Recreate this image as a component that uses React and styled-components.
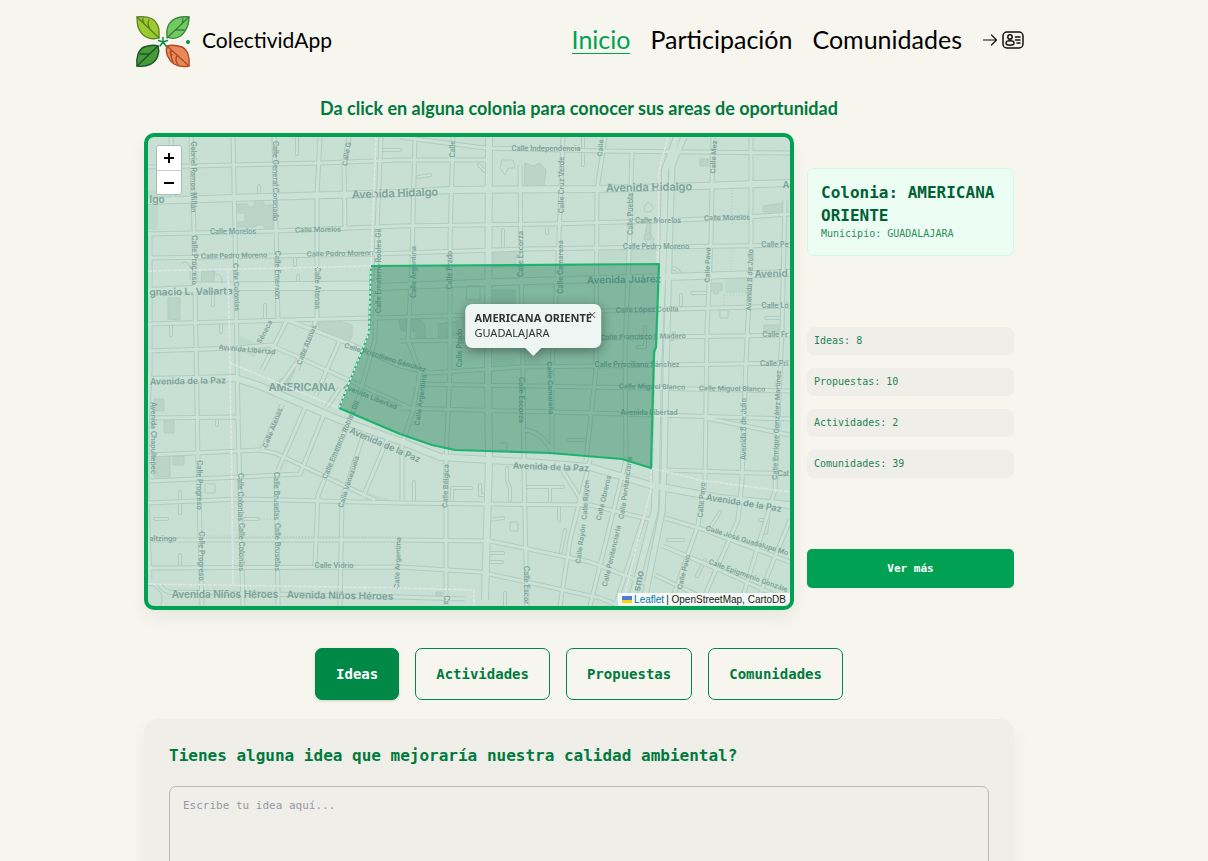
import React, { useState } from "react";
import styled, { createGlobalStyle, css } from "styled-components";

const mono = `"DejaVu Sans Mono", "Liberation Mono", monospace`;
const rounded = `Lato, "Open Sans", sans-serif`;

const color = {
  page: "#f6f5ee",
  panel: "#efeee9",
  green: "#00a152",
  active: "#008846",
  text: "#007a3d",
  dark: "#006034",
  soft: "#2b8d58",
};

const GlobalStyle = createGlobalStyle`
  * { box-sizing: border-box; }
  body { margin: 0; background: ${color.page}; font-family: ${mono}; color: ${color.text}; }
  h1, h2, p, ul { margin: 0; padding: 0; }
  ul { list-style: none; }
  button, textarea { font-family: inherit; }
`;

const Page = styled.div`
  padding-right: 50px;
`;

const Header = styled.header`
  max-width: 890px;
  height: 84px;
  margin: 0 auto;
  display: flex;
  align-items: center;
  justify-content: space-between;
  font-family: ${rounded};
`;

const Brand = styled.a`
  display: flex;
  align-items: center;
  gap: 10px;
  color: #000;
  font-size: 21px;
  line-height: 28px;
  text-decoration: none;
  svg { display: block; }
`;

const BrandName = styled.span`
  padding-bottom: 4px;
`;

const Nav = styled.nav`
  display: flex;
  align-items: center;
  gap: 20px;
  padding-bottom: 4px;
`;

const NavLink = styled.a`
  padding-bottom: 2px;
  font-size: 25px;
  line-height: 24px;
  color: ${(p) => (p.$current ? color.green : "#000")};
  text-decoration: none;
  border-bottom: 1px solid ${(p) => (p.$current ? color.green : "transparent")};
`;

const AccountLink = styled.a`
  display: flex;
  align-items: center;
  gap: 4px;
  color: #111;
  svg { display: block; }
`;

const Main = styled.main`
  max-width: 870px;
  margin: 0 auto;
`;

const Title = styled.h1`
  font: 700 18px/24px ${rounded};
  text-align: center;
  padding: 12px 0 13px;
`;

const Explorer = styled.section`
  display: grid;
  grid-template-columns: minmax(0, 1fr) 207px;
  gap: 13px;
`;

const MapFrame = styled.div`
  position: relative;
  height: 477px;
  border: 4px solid ${color.green};
  border-radius: 10px;
  overflow: hidden;
  background: #c8e0d3;
  box-shadow: 0 8px 16px rgba(0, 40, 20, 0.06);
`;

const MapDrawing = styled.svg`
  display: block;
  width: 100%;
  height: 100%;
  font-family: Inter, "Open Sans", sans-serif;
`;

const ZoomControl = styled.div`
  position: absolute;
  top: 8px;
  left: 8px;
  border: 1px solid #a9bdb2;
  border-radius: 3px;
  overflow: hidden;
  display: grid;
`;

const ZoomButton = styled.button`
  width: 24px;
  height: 24px;
  padding: 0;
  border: 0;
  background: #fff;
  color: #000;
  display: grid;
  place-items: center;
  & + & { border-top: 1px solid #ccc; }
`;

const Popup = styled.div`
  position: absolute;
  top: 167px;
  left: 60%;
  transform: translateX(-50%);
  padding: 6px 9px 8px;
  border-radius: 7px;
  background: #eef5f2;
  color: #333;
  font: 11px/15px "Noto Sans", sans-serif;
  white-space: nowrap;
  filter: drop-shadow(0 3px 6px rgba(0, 0, 0, 0.4));
  strong { display: block; }
  &::after {
    content: "";
    position: absolute;
    top: 100%;
    left: calc(50% - 8px);
    border: 8px solid transparent;
    border-top-color: #eef5f2;
    border-bottom: 0;
  }
`;

const CloseButton = styled.button`
  position: absolute;
  top: 7px;
  right: 5px;
  width: 8px;
  height: 8px;
  padding: 0;
  border: 0;
  background: none;
  color: #555;
  svg { display: block; }
`;

const Attribution = styled.div`
  position: absolute;
  right: 0;
  bottom: 0;
  display: flex;
  align-items: center;
  gap: 2px;
  padding: 0 4px;
  background: rgba(255, 255, 255, 0.8);
  color: #222;
  font: 10px/13px "Liberation Sans", Arial, sans-serif;
  a { color: #0078a8; text-decoration: none; }
`;

const Side = styled.aside`
  display: flex;
  flex-direction: column;
  justify-content: space-between;
  padding: 35px 0 22px;
`;

const ColonyCard = styled.div`
  padding: 12px 13px 14px;
  border: 1px solid #d2fae3;
  border-radius: 7px;
  background: #ecfdf3;
  h2 { font-size: 16px; line-height: 23px; color: ${color.dark}; }
  p { font-size: 10px; line-height: 14px; color: ${color.soft}; }
`;

const Stats = styled.ul`
  display: grid;
  gap: 13px;
`;

const Stat = styled.li`
  padding: 0 7px;
  border-radius: 7px;
  background: ${color.panel};
  font-size: 10px;
  line-height: 28px;
  color: #238650;
`;

const MoreButton = styled.button`
  height: 39px;
  border: 0;
  border-radius: 5px;
  background: ${color.green};
  color: #fff;
  font-size: 11px;
  font-weight: 700;
`;

const Tabs = styled.div`
  display: flex;
  justify-content: center;
  flex-wrap: wrap;
  gap: 16px;
  padding: 38px 0 19px;
`;

const Tab = styled.button`
  height: 52px;
  padding: 0 20px;
  border: 1px solid ${color.active};
  border-radius: 7px;
  background: transparent;
  color: ${color.text};
  font-size: 14px;
  font-weight: 700;
  ${(p) =>
    p.$active &&
    css`
      background: ${color.active};
      color: #fff;
      box-shadow: 0 1px 3px rgba(0, 0, 0, 0.15);
    `}
`;

const IdeaPanel = styled.section`
  padding: 25px;
  border-radius: 14px 14px 0 0;
  background: ${color.panel};
  box-shadow: 0 10px 20px rgba(0, 0, 0, 0.05);
`;

const IdeaLabel = styled.label`
  display: block;
  font-size: 16px;
  font-weight: 700;
  line-height: 24px;
  margin-bottom: 18px;
`;

const IdeaBox = styled.textarea`
  display: block;
  width: 100%;
  height: 120px;
  padding: 12px 13px;
  border: 1px solid #b9bab4;
  border-radius: 7px;
  background: transparent;
  color: #333;
  font-size: 11px;
  line-height: 14px;
  resize: none;
  &::placeholder { color: #929aa6; opacity: 1; }
`;

function Logo() {
  return (
    <svg width="58" height="56" viewBox="134 14 58 56" fill="none" strokeLinejoin="round" strokeLinecap="round" aria-hidden="true">
      <g stroke="#5f7f26" strokeWidth="1.3">
        <path fill="#9bcc2f" d="M137 17C146 16 154 18 157 24C160 29 159 34 159 38C152 40 144 38 140 31C137 27 137 22 137 17Z" />
        <path d="M137 17L159 38M143 18C142 20 143 22 144 23M149 20C147 23 148 26 150 29M139 19L141 21" />
      </g>
      <g stroke="#37803b" strokeWidth="1.3">
        <path fill="#72cb60" d="M189 17C180 16 173 18 169 24C166 29 167 34 167 37C173 40 181 38 185 31C188 27 189 22 189 17Z" />
        <path d="M189 17L167 38M182 24L183 19M175 30H184" />
      </g>
      <g stroke="#1e552c" strokeWidth="1.4">
        <path fill="#469a38" d="M137 66C136 58 138 50 144 47C150 45 155 45 158 46C160 52 158 60 151 64C147 66 142 67 137 66Z" />
        <path d="M137 66L158 46M140 54H149" />
      </g>
      <g stroke="#b54a20" strokeWidth="1.4">
        <path fill="#e68a5c" d="M189 66C190 58 188 50 182 47C176 45 170 45 167 46C165 52 168 60 174 64C179 67 184 67 189 66Z" />
        <path d="M189 66L167 46M171 50C170 55 172 59 173 62M177 56C175 59 176 62 178 65M172 55L170 53" />
      </g>
      <path stroke="#0b8d46" strokeWidth="1.5" d="M163 42V37.500M163 42L158.500 40.500M163 42L167.500 40.500M163 42L160 46M163 42L166 46" />
      <circle cx="188" cy="42" r="2" fill="#0b8d46" />
    </svg>
  );
}

function AccountIcon() {
  return (
    <>
      <svg width="16" height="14" viewBox="0 0 16 14" fill="none" stroke="currentColor" strokeWidth="1.2" strokeLinecap="round" strokeLinejoin="round" aria-hidden="true">
        <path d="M1.500 7H14.500M9.500 2L14.500 7L9.500 12" />
      </svg>
      <svg width="22" height="18" viewBox="0 0 22 18" fill="none" stroke="currentColor" strokeWidth="1.500" strokeLinecap="round" aria-hidden="true">
        <rect x="1" y="1" width="20" height="16" rx="4" />
        <circle cx="8" cy="6" r="2.200" />
        <ellipse cx="8" cy="12" rx="4" ry="2.200" />
        <path d="M13.500 6H18M13.500 9H18M15 12H18" />
      </svg>
    </>
  );
}

const streets = [
  "M171 137L173 197", "M150 232V322", "M150 325V370L147 430V500L150 580",
  "M191 137L194 230L198 460L202 606", "M233 137L235 232L238 418L243 606",
  "M274 137L276 228L278 320", "M276 474L278 592V606", "M320 137L317 195V318",
  "M349 137L344 165L345 229", "M381 137L377 228L375 340L358 400L318 495L315 565",
  "M415 137L412 260L408 340L420 372L413 410L402 445V500", "M453 137L450 240V370L446 460V606",
  "M563 137L558 260L552 368V455", "M520 165L521 260L523 368L524 470L527 606",
  "M605 137L597 190L596 370L586 460", "M632 150L630 230L625 350L626 460L590 606",
  "M590 460L570 540L560 606", "M643 520L615 606", "M148 167L320 163L400 160H489",
  "M400 137L485 148L600 151L790 153", "M148 234L276 231L400 226L550 224L657 221L747 217L790 214",
  "M150 258L276 256L373 254L527 249L790 245", "M196 284L380 283", "M148 324L287 320L375 318L545 313L600 311L790 306",
  "M148 351L237 348L270 345L300 358L375 392L415 410", "M400 341L600 338L790 335",
  "M287 320L353 345L400 366L430 373L520 367L600 366L790 363", "M415 384L590 387L790 391",
  "M400 408L590 413L790 419", "M705 418L790 435", "M665 470L790 474",
  "M150 418L240 417", "M150 455L260 450L275 453L375 500", "M150 481L240 477L300 474L325 412",
  "M148 503L240 499L400 503L590 505L652 520", "M665 518L705 530L790 562",
  "M148 540L400 540L490 541L590 562L650 585", "M148 568L400 567L480 572L600 598L620 606",
  "M663 546L720 570L790 602", "M655 575L720 606", "M713 137L711 240L707 330L705 480L698 525L670 606",
  "M751 137V260L746 360L742 480L738 520L700 606", "M785 200L782 330L775 490L740 606",
  "M790 520L755 606", "M287 320L262 370", "M317 318L297 370", "M340 340L316 395",
  "M282 405L262 450", "M305 408L278 470", "M365 430L342 500L340 606", "M388 438L363 497",
  "M340 388L327 407", "M300 358L277 390", "M561 468L583 503", "M523 430Q540 430 551 450",
  "M160 585Q166 595 180 592L400 597L465 599",
];

const avenues = [
  "M148 201L233 198L400 193L450 190L597 189L700 186L790 183",
  "M148 291L233 287L380 287L500 282L600 279L667 277L790 273",
  "M148 380L235 378L260 386L340 420L400 441L440 457L540 463L590 467L650 485L720 498L790 505",
  "M489 137L488 370L489 460L485 600", "M677 137L665 170L663 260L658 370L656 470L655 510L630 606",
];

const lanes = [
  "M297 137V154", "M259 186V195", "M298 276V286", "M265 305V318", "M213 290V305",
  "M171 325V335", "M221 322V332", "M295 255V265", "M217 418V425", "M180 492V513", "M155 519H167",
  "M180 555V565", "M245 519H258", "M383 150H400", "M418 177L430 175", "M479 165L486 172", "M583 137V165",
  "M503 230V249", "M547 225V233", "M414 482V502", "M452 488H471M452 488V502", "M480 485V495H486",
  "M507 468V480L510 488V500", "M525 487H563", "M550 488V502", "M559 505V520", "M565 530L561 552",
  "M490 520L503 518", "M490 553H503", "M490 562H502", "M505 593V606", "M569 440H586",
  "M692 293H706M681 305V295", "M766 318H780", "M720 512L710 528", "M668 540H683", "M705 560L697 576",
  "M668 337Q674 343 674 333", "M645 327V347H638", "M760 520H768L766 533", "M670 268Q680 268 680 276",
];

const buildings = [
  "M238 204H248V207H254V202H264V205H273V228H264V225H256V227H238V222H245V213H238Z",
  "M202 271H215L213 285H201Z", "M168 298H180V320L168 319Z",
  "M318 323L335 320L352 325V336L348 344L334 338L320 332Z", "M525 163L533 166L540 163L546 170L544 186L524 187Z",
  "M493 251H516V267H493Z", "M763 206L784 203V212H763Z", "M700 159H712V166H700Z", "M710 283H722V291H718V294H714V291H710Z",
  "M764 325H779V332H764Z", "M154 399H164V411H154Z", "M164 420H174V433H164Z", "M154 456H170V477H154Z", "M173 456H184V465H173Z",
  "M399 319H420L425 324V339H416V331H401Z", "M438 324L458 321V335L439 339Z",
  "M492 290H515V306H492Z", "M275 383L295 370L288 385Z", "M647 223H651V240H644Z", "M436 592H442V596H436Z",
];

const parks = ["M148 190H158V230H148Z", "M240 336L262 346L254 358L240 350Z", "M600 249H656V263H600Z", "M725 278H747V293H725Z", "M368 493L395 501L370 500Z", "M484 358H516V370H484Z"];

const boundaries = [
  "M148 271L371 266", "M376 137L371 266", "M228 270L230 365L232 500L233 585", "M230 363L339 408",
  "M651 468L700 480L790 492", "M651 470V490L638 540L622 606", "M668 137L659 170L658 264", "M148 584L400 588L474 590V606",
];

const colony = "M371 266L659 264L656 347L654 352L651 468L622 459L550 453L455 450L432 445L400 434L339 408L369 333Z";
const colonyEdge = "M371 266L659 264L656 347L654 352L651 468L622 459L550 453L455 450L432 445L400 434L339 408";

// text, centre x, centre y, rotation, size
const labels = [
  ["Avenida Hidalgo", 395, 194, -2, 11], ["Avenida Hidalgo", 649, 188, -1, 11], ["lgo", 157, 200, 0, 10],
  ["A", 786, 185, 0, 9], ["Avenida Juárez", 624, 280, -1, 10], ["Avenid", 771, 274, -1, 10],
  ["gnacio L. Vallarta", 191, 292, -1, 10], ["Calle Morelos", 233, 232, 0, 7], ["Calle Morelos", 318, 230, -1, 7],
  ["Calle Morelos", 658, 221, 0, 7], ["Calle Morelos", 727, 218, -1, 7], ["Calle Pedro Moreno", 234, 256, -1, 7],
  ["Calle Pedro Moreno", 340, 254, -1, 7], ["Calle Pedro Moreno", 656, 247, 0, 7], ["Calle Pe", 775, 245, 0, 7],
  ["Calle Independencia", 546, 149, 0, 7], ["Calle López Cotilla", 647, 310, -1, 7], ["Calle Ló", 775, 306, 0, 7],
  ["Calle Francisco I. Madero", 643, 337, -1, 7], ["Calle Fr", 775, 335, 0, 7], ["Calle Prisciliano Sánchez", 637, 365, 0, 7],
  ["Calle Pri", 774, 364, 0, 7], ["Calle Miguel Blanco", 652, 387, 1, 7], ["Calle Miguel Blanco", 732, 389, 1, 7],
  ["Avenida Libertad", 649, 413, 0, 7], ["Avenida Libertad", 247, 350, 5, 7], ["Calle Priscíliano Sánchez", 385, 358, 17, 7],
  ["Avenida Libertad", 370, 397, 22, 7], ["AMERICANA", 302, 388, 0, 11], ["Avenida de la Paz", 188, 381, -1, 9],
  ["Avenida de la Paz", 385, 445, 23, 9], ["Avenida de la Paz", 551, 467, 2, 9], ["Avenida de la Paz", 744, 503, 9, 9],
  ["Avenida Niños Héroes", 225, 595, 0, 10], ["Avenida Niños Héroes", 340, 596, 1, 10], ["Calle Vidrio", 334, 566, 0, 7],
  ["altzingo", 163, 539, 0, 7], ["Calle José Guadalupe Mo", 747, 541, 17, 7], ["Calle Epigmenio Gonzále", 748, 576, 20, 7], ["Cal", 783, 474, 0, 7],
  ["Gabriel Ramos Millán", 193, 177, 90, 7], ["Calle General Coronado", 275, 181, 90, 7], ["Calle Progreso", 194, 260, 90, 7],
  ["Calle Colonias", 236, 287, 88, 7], ["Calle Emerson", 277, 275, 90, 7], ["Calle Atenas", 317, 288, 90, 7],
  ["Séneca", 265, 332, -62, 7], ["Calle Atenas", 307, 345, -68, 7], ["Calle Atenas", 273, 428, -68, 7], ["Avenida Chapultepec", 153, 438, 90, 7],
  ["Calle Progreso", 199, 485, 90, 7], ["Calle Progreso", 201, 556, 90, 7], ["Calle Colonias", 240, 497, 90, 7], ["Calle Colonias", 241, 547, 90, 7],
  ["Calle Bruselas", 276, 496, 90, 7], ["Calle Bruselas", 277, 547, 90, 7], ["Calle Emeterio Robles Gil", 341, 440, -67, 7], ["Calle Venezuela", 349, 482, -72, 7],
  ["Calle Emeterio Robles Gil", 379, 271, -90, 7], ["Calle G", 347, 154, -80, 7], ["Calle", 453, 149, -90, 7], ["Calle", 601, 148, -85, 7],
  ["Calle Argentina", 414, 272, -90, 7], ["Calle Argentina", 421, 400, -82, 7], ["Calle Argentina", 398, 563, -88, 7],
  ["Calle Prado", 450, 270, -90, 7], ["Calle Prado", 460, 348, -90, 7], ["Calle Escorza", 521, 254, -90, 7], ["Calle Escorza", 521, 400, 90, 7],
  ["Calle Camarena", 561, 267, -90, 7], ["Calle Camarena", 550, 388, 88, 7], ["Calle Cruz Verde", 562, 185, -90, 7], ["Calle Puebla", 631, 214, -90, 7],
  ["Calle Mez", 714, 157, -87, 7], ["Calle Pavo", 708, 265, -88, 7], ["Avenida 8 de Julio", 750, 280, -88, 7], ["Avenida 8 de Julio", 744, 429, -90, 7],
  ["Calle Enrique González Martínez", 777, 425, -88, 7], ["Calle Bélgica", 446, 486, -88, 7], ["Calle Escor", 526, 585, 90, 7], ["Calle Rayón", 586, 500, -86, 7],
  ["Calle Rayón", 581, 544, -82, 7], ["Calle Obreros", 604, 498, -77, 7], ["Calle Penitenciaria", 626, 488, -82, 7], ["Calle Penitenciaria", 612, 556, -77, 7],
  ["Calle Pavo", 702, 500, -86, 7], ["Calle Pavo", 684, 572, -76, 7], ["smo", 639, 581, -78, 10], ["Ca", 446, 600, 90, 7],
];

function Lines({ paths, ...rest }) {
  return (
    <g fill="none" strokeLinejoin="round" {...rest}>
      {paths.map((d) => <path key={d} d={d} />)}
    </g>
  );
}

function ColonyMap() {
  return (
    <MapDrawing viewBox="148 137 642 469" preserveAspectRatio="xMidYMid slice" role="img" aria-label="Mapa de colonias">
      <g fill="#bedaca">{parks.map((d) => <path key={d} d={d} />)}</g>
      <g fill="#bbd4c8" stroke="#b3cdc1" strokeWidth="1">{buildings.map((d) => <path key={d} d={d} />)}</g>
      <Lines paths={lanes} stroke="#b1cbc0" strokeWidth="4" strokeLinecap="round" />
      <Lines paths={lanes} stroke="#cae2d6" strokeWidth="2" strokeLinecap="round" />
      <Lines paths={streets} stroke="#b1cbc0" strokeWidth="5" />
      <Lines paths={avenues} stroke="#b1cbc0" strokeWidth="8" />
      <Lines paths={["M684 137L672 165L669 260L666 370L664 470L662 512L643 606"]} stroke="#b1cbc0" strokeWidth="7" />
      <Lines paths={streets} stroke="#cbe2d6" strokeWidth="3" />
      <Lines paths={avenues} stroke="#cbe2d6" strokeWidth="6" />
      <Lines paths={["M684 137L672 165L669 260L666 370L664 470L662 512L643 606"]} stroke="#cbe2d6" strokeWidth="5" />
      <g fill="none" stroke="#b1cbc0">
        <circle cx="148" cy="599" r="14" />
        <path d="M502 160H513L515 168H508L505 175L500 168ZM645 205Q650 199 653 209Q648 215 644 210ZM644 237L649 232L654 240L648 247Z" />
        <path d="M180 265Q186 258 190 267V280M216 275Q222 272 222 284M467 286H480V300H466ZM500 443H507V450H498M205 484H215V493H205ZM510 522H518V531H510ZM720 310H728V318H720Z" />
        <path strokeDasharray="1 2" d="M732 190V224M731 248V272M724 295H746M724 295V306M258 519H275M200 536L400 537" />
      </g>
      <g fill="#7ca29b" fontWeight="600" textAnchor="middle">
        {labels.map(([text, x, y, angle, size], i) => (
          <text key={i} fontSize={size} transform={`translate(${x} ${y}) rotate(${angle})`} dy={size > 8 ? 3 : 2}>{text}</text>
        ))}
      </g>
      <Lines paths={boundaries} stroke="#dde6ea" strokeWidth="1.500" strokeDasharray="4 1" />
      <path d={colony} fill="rgb(22,121,83)" fillOpacity="0.4" />
      <path d="M339 408L369 333L371 266" fill="none" stroke="#1fb370" strokeWidth="2" />
      <path d="M339 408L369 333L371 266" fill="none" stroke="#e8f3ef" strokeWidth="1.500" strokeDasharray="3 2" />
      <path d={colonyEdge} fill="none" stroke="#1fb370" strokeWidth="2.200" strokeLinejoin="round" />
    </MapDrawing>
  );
}

const stats = [["Ideas", 8], ["Propuestas", 10], ["Actividades", 2], ["Comunidades", 39]];
const tabs = ["Ideas", "Actividades", "Propuestas", "Comunidades"];

export default function App() {
  const [tab, setTab] = useState("Ideas");
  const [open, setOpen] = useState(true);
  return (
    <Page>
      <GlobalStyle />
      <Header>
        <Brand href="#"><Logo /><BrandName>ColectividApp</BrandName></Brand>
        <Nav>
          <NavLink href="#" $current>Inicio</NavLink>
          <NavLink href="#">Participación</NavLink>
          <NavLink href="#">Comunidades</NavLink>
          <AccountLink href="#" aria-label="Iniciar sesión"><AccountIcon /></AccountLink>
        </Nav>
      </Header>
      <Main>
        <Title>Da click en alguna colonia para conocer sus areas de oportunidad</Title>
        <Explorer>
          <MapFrame>
            <ColonyMap />
            <ZoomControl>
              <ZoomButton aria-label="Acercar">
                <svg width="12" height="12" viewBox="0 0 12 12" stroke="currentColor" strokeWidth="2"><path d="M1 6H11M6 1V11" /></svg>
              </ZoomButton>
              <ZoomButton aria-label="Alejar">
                <svg width="12" height="12" viewBox="0 0 12 12" stroke="currentColor" strokeWidth="2"><path d="M1 6H11" /></svg>
              </ZoomButton>
            </ZoomControl>
            {open && (
              <Popup>
                <strong>AMERICANA ORIENTE</strong>
                GUADALAJARA
                <CloseButton aria-label="Cerrar" onClick={() => setOpen(false)}>
                  <svg width="8" height="8" viewBox="0 0 8 8" stroke="currentColor" strokeWidth="1"><path d="M1 1L7 7M7 1L1 7" /></svg>
                </CloseButton>
              </Popup>
            )}
            <Attribution>
              <svg width="10" height="7" viewBox="0 0 10 7" aria-hidden="true">
                <path fill="#4c7be1" d="M0 0H10V4H0Z" /><path fill="#ffd500" d="M0 4H10V7H0Z" />
              </svg>
              <a href="#">Leaflet</a>
              <span>| OpenStreetMap, CartoDB</span>
            </Attribution>
          </MapFrame>
          <Side>
            <ColonyCard>
              <h2>Colonia: AMERICANA ORIENTE</h2>
              <p>Municipio: GUADALAJARA</p>
            </ColonyCard>
            <Stats>
              {stats.map(([name, count]) => <Stat key={name}>{name}: {count}</Stat>)}
            </Stats>
            <MoreButton>Ver más</MoreButton>
          </Side>
        </Explorer>
        <Tabs>
          {tabs.map((name) => (
            <Tab key={name} $active={tab === name} onClick={() => setTab(name)}>{name}</Tab>
          ))}
        </Tabs>
        <IdeaPanel>
          <IdeaLabel htmlFor="idea">Tienes alguna idea que mejoraría nuestra calidad ambiental?</IdeaLabel>
          <IdeaBox id="idea" placeholder="Escribe tu idea aquí..." />
        </IdeaPanel>
      </Main>
    </Page>
  );
}
